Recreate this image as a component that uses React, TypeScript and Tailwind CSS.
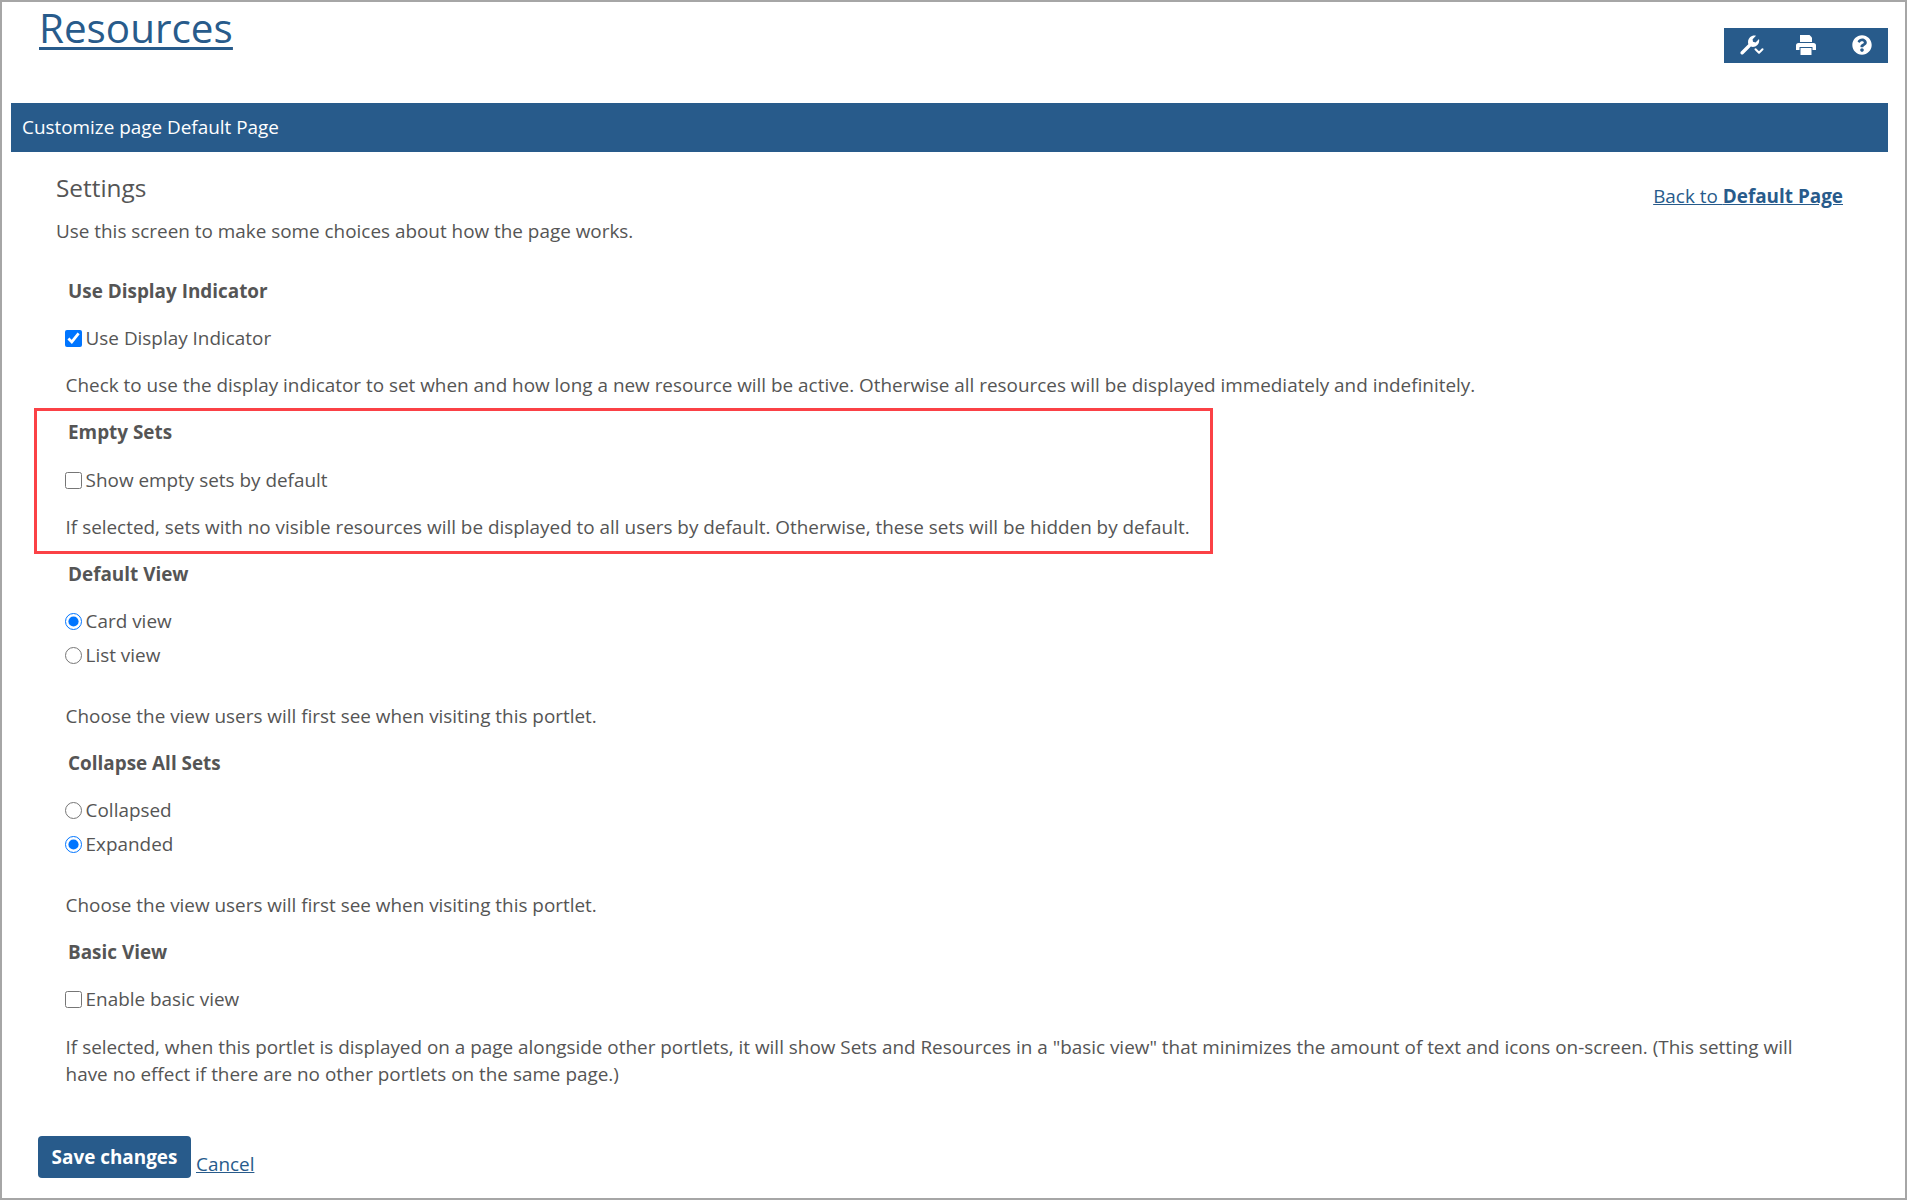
import { ChevronDown } from "lucide-react";
import { FaQuestionCircle } from "react-icons/fa";
import React from "react";

const Heading = ({ children }: { children: React.ReactNode }) => (
  <div className="pl-[12px] h-[27px] leading-[27px] mb-[21px] font-bold">{children}</div>
);

const Option = ({
  type,
  name,
  checked,
  label,
}: {
  type: "checkbox" | "radio";
  name: string;
  checked?: boolean;
  label: string;
}) => (
  <label className="flex items-center h-[27px] pl-[9px]">
    <input
      type={type}
      name={name}
      defaultChecked={checked}
      className="w-[17px] h-[17px] m-0 mr-[3.6px] shrink-0"
    />
    {label}
  </label>
);

const Help = ({ children }: { children: React.ReactNode }) => (
  <p className="pl-[9.6px] leading-[27px]">{children}</p>
);

const App = () => {
  return (
    <div className="relative w-[1907px] h-[1200px] bg-white border-2 border-[#a6a6a6] text-[#555555] text-[18.9px] font-['Open_Sans',sans-serif] overflow-hidden">
      <div className="flex justify-between h-[101px] pl-[37px] pr-[17px]">
        <h1 className="text-[40.4px] leading-[51px] text-[#285b8b] underline decoration-[3px] underline-offset-[4px]">
          <a href="#">Resources</a>
        </h1>
        <div className="flex items-center w-[164px] h-[35px] mt-[26px] pl-[16px] pb-[1px] bg-[#285b8b] text-white">
          <span className="relative w-[22px] h-[20px] mr-[34px]">
            <svg viewBox="0 0 20 20" className="w-[20px] h-[20px]" fill="currentColor">
              <path d="M1 16.500 8.300 9.200C7.600 6.600 8.200 4 10 2.300 11.700.7 14 .2 16 .8L12.600 4.200 13 6.800 15.600 7.400 19 4C19.600 6 19 8.400 17.400 10 15.700 11.700 13.200 12.300 10.900 11.600L3.400 19C2.700 19.700 1.600 19.700.9 19 .2 18.300.3 17.200 1 16.500Z" />
            </svg>
            <ChevronDown className="absolute right-[-4px] bottom-[-3px] w-[14px] h-[14px]" strokeWidth={3.5} />
          </span>
          <svg viewBox="0 0 20 20" className="w-[20px] h-[20px] mr-[36px]" fill="currentColor">
            <path d="M4 0h9.500L16 2.500V7H4V0Z" />
            <path d="M2.500 8h15A2.500 2.500 0 0 1 20 10.500V15h-3.500v-3h-13v3H0v-4.500A2.500 2.500 0 0 1 2.500 8Z" />
            <path d="M4.500 13h11v7h-11v-7Z" />
          </svg>
          <FaQuestionCircle className="w-[20px] h-[20px]" />
        </div>
      </div>

      <div className="ml-[9px] mr-[17px] h-[49px] pl-[11px] flex items-center bg-[#285b8b] text-white">
        Customize page Default Page
      </div>

      <div className="relative pl-[54px] pr-[62px] mt-[19px]">
        <div className="flex justify-between">
          <div>
            <h2 className="text-[24.4px] leading-[33px]">Settings</h2>
            <p className="leading-[27px] mt-[14px]">
              Use this screen to make some choices about how the page works.
            </p>
          </div>
          <a href="#" className="mt-[12px] h-[27px] leading-[27px] text-[#285b8b] underline">
            Back to <b>Default Page</b>
          </a>
        </div>

        <div className="mt-[33px] flex flex-col">
          <Heading>Use Display Indicator</Heading>
          <div className="-mt-[1px]">
            <Option type="checkbox" name="display" checked label="Use Display Indicator" />
          </div>
          <div className="mt-[20px] mb-[20px]">
            <Help>
              Check to use the display indicator to set when and how long a new resource will be active. Otherwise all
              resources will be displayed immediately and indefinitely.
            </Help>
          </div>

          <Heading>Empty Sets</Heading>
          <Option type="checkbox" name="empty" label="Show empty sets by default" />
          <div className="mt-[20px] mb-[20px]">
            <Help>
              If selected, sets with no visible resources will be displayed to all users by default. Otherwise, these
              sets will be hidden by default.
            </Help>
          </div>

          <Heading>Default View</Heading>
          <div className="flex flex-col gap-[7px] -mt-[1px]">
            <Option type="radio" name="view" checked label="Card view" />
            <Option type="radio" name="view" label="List view" />
          </div>
          <div className="mt-[34px] mb-[20px]">
            <Help>Choose the view users will first see when visiting this portlet.</Help>
          </div>

          <Heading>Collapse All Sets</Heading>
          <div className="flex flex-col gap-[7px] -mt-[1px]">
            <Option type="radio" name="collapse" label="Collapsed" />
            <Option type="radio" name="collapse" checked label="Expanded" />
          </div>
          <div className="mt-[34px] mb-[20px]">
            <Help>Choose the view users will first see when visiting this portlet.</Help>
          </div>

          <Heading>Basic View</Heading>
          <div className="-mt-[1px]">
            <Option type="checkbox" name="basic" label="Enable basic view" />
          </div>
          <div className="mt-[21px] pr-[20px]">
            <Help>
              If selected, when this portlet is displayed on a page alongside other portlets, it will show Sets and
              Resources in a "basic view" that minimizes the amount of text and icons on-screen. (This setting will
              have no effect if there are no other portlets on the same page.)
            </Help>
          </div>
        </div>
      </div>

      <div className="flex items-end pl-[36px] mt-[48px]">
        <button className="h-[42px] w-[153px] rounded-[4px] bg-[#285b8b] text-white font-bold">Save changes</button>
        <a href="#" className="ml-[5px] text-[#285b8b] underline leading-[27px]">
          Cancel
        </a>
      </div>

      <div className="absolute left-[32px] top-[406px] w-[1179px] h-[146px] border-[3px] border-[#fb4146]" />
    </div>
  );
};

export default App;
